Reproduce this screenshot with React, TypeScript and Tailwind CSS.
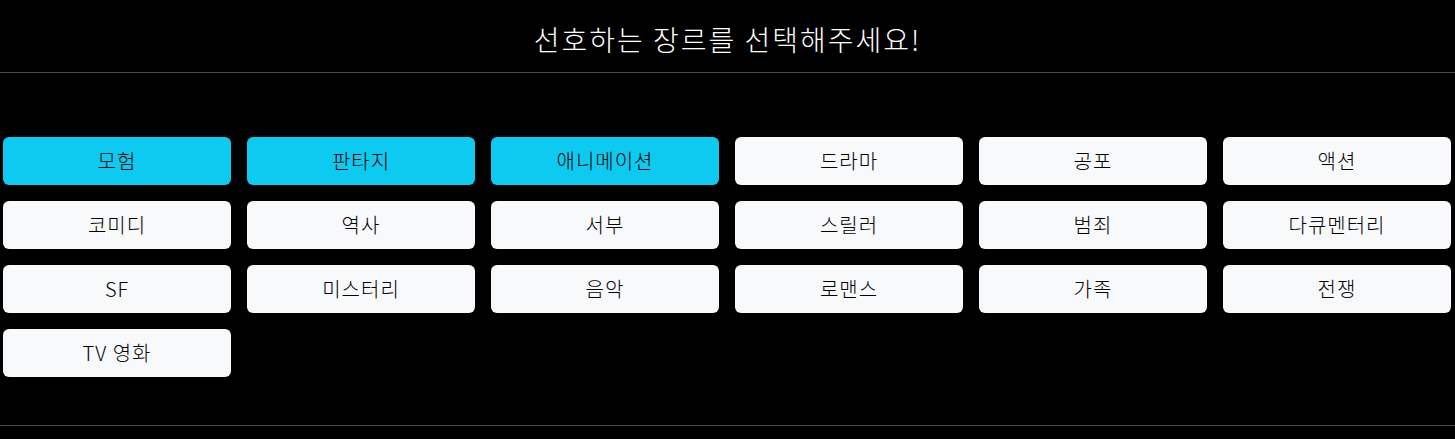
import React from "react";

const genres = [
  "모험", "판타지", "애니메이션", "드라마", "공포", "액션",
  "코미디", "역사", "서부", "스릴러", "범죄", "다큐멘터리",
  "SF", "미스터리", "음악", "로맨스", "가족", "전쟁",
  "TV 영화",
];
const selected = new Set(["모험", "판타지", "애니메이션"]);

export default function App() {
  return (
    <div
      className="w-[1455px] h-[439px] bg-black text-white"
      style={{ fontFamily: '"Noto Sans CJK KR", "Noto Sans", sans-serif' }}
    >
      <div className="h-[73px] flex items-center justify-center border-b border-[#4b4b4b]">
        <h2 className="text-[28px] leading-none font-light tracking-[2px] pt-[6px]">선호하는 장르를 선택해주세요!</h2>
      </div>
      <div className="pt-[64px] pb-[48px] pl-[3px] pr-[4px] border-b border-[#4b4b4b]">
        <div className="grid grid-cols-6 gap-4">
          {genres.map((g) => (
            <button
              key={g}
              className={
                "h-[48px] rounded-[6px] text-black text-[20px] leading-none font-light tracking-[1px] flex items-center justify-center " +
                (selected.has(g) ? "bg-[#0dcaf0]" : "bg-[#f8f9fa]")
              }
            >
              {g}
            </button>
          ))}
        </div>
      </div>
    </div>
  );
}
